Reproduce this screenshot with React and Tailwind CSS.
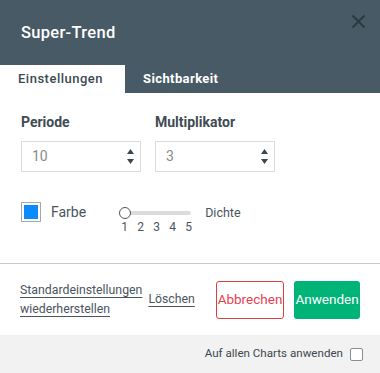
const font = { fontFamily: 'Roboto, "Liberation Sans", sans-serif' };

const NumberInput = ({ value }) => (
  <div className="w-[120px] h-[31px] border border-[#dcdcdc] flex items-center justify-between pl-[10px] pr-[6px]">
    <span className="text-[14px] text-[#8a8a8a]">{value}</span>
    <div className="flex flex-col items-center gap-[5px]">
      <svg width="7" height="5" viewBox="0 0 7 5"><path d="M3.5 0L7 5H0z" fill="#3c4850" /></svg>
      <svg width="7" height="5" viewBox="0 0 7 5"><path d="M0 0h7L3.5 5z" fill="#3c4850" /></svg>
    </div>
  </div>
);

export default function App() {
  return (
    <div className="w-[380px] h-[373px] bg-white flex flex-col overflow-hidden" style={font}>
      {/* Header */}
      <div className="bg-[#485a66] relative">
        <div className="h-[65px] flex items-center pl-[21px] pt-[1px]">
          <h1 className="text-[16.5px] font-medium text-white tracking-[0.3px]">Super-Trend</h1>
        </div>
        <svg className="absolute left-[351px] top-[14px]" width="15" height="15" viewBox="0 0 15 15">
          <path d="M1.5 1.5l12 12M13.5 1.5l-12 12" stroke="#2c3940" strokeWidth="2" />
        </svg>
        <div className="flex h-[28px]">
          <div className="w-[125px] bg-white flex items-center pl-[18px] text-[13px] font-medium text-[#3d4a52] tracking-[0.5px]">Einstellungen</div>
          <div className="flex items-center pl-[18px] text-[13px] font-bold text-white tracking-[0.4px]">Sichtbarkeit</div>
        </div>
      </div>

      {/* Body */}
      <div className="h-[170px] pl-[21px] pt-[20px]">
        <div className="flex gap-[14px]">
          <div>
            <div className="text-[14px] font-bold text-[#404b53] leading-[18px] mb-[10px]">Periode</div>
            <NumberInput value="10" />
          </div>
          <div>
            <div className="text-[14px] font-bold text-[#404b53] leading-[18px] mb-[10px]">Multiplikator</div>
            <NumberInput value="3" />
          </div>
        </div>
        <div className="flex items-start mt-[30px]">
          <div className="w-[20px] h-[20px] border border-[#a8a8a8] p-[2px]">
            <div className="w-full h-full bg-[#0a8cff]" />
          </div>
          <span className="ml-[10px] text-[14px] text-[#4a5560] leading-[20px]">Farbe</span>
          <div className="ml-[33px] w-[80px] flex flex-col">
            <div className="relative h-[20px]">
              <div className="absolute left-[6px] top-[9px] w-[66px] h-[4px] bg-[#dcdcdc] rounded" />
              <div className="absolute left-0 top-[5px] w-[12px] h-[12px] rounded-full border border-[#555] bg-white" />
            </div>
            <div className="flex text-[12px] text-[#4a5560] leading-[12px] -mt-[1px]">
              <span className="w-[16.5px] pl-[2px]">1</span>
              <span className="w-[16.5px] pl-[2px]">2</span>
              <span className="w-[16.5px] pl-[2px]">3</span>
              <span className="w-[16.5px] pl-[2px]">4</span>
              <span className="w-[16.5px] pl-[2px]">5</span>
            </div>
          </div>
          <span className="ml-[6px] text-[12.5px] text-[#4a5560] leading-[22px]">Dichte</span>
        </div>
      </div>

      <div className="h-px bg-[#c8c8c8]" />

      {/* Footer */}
      <div className="h-[71px] flex items-center pl-[20px] pr-[20px]">
        <div className="flex flex-col text-[12.3px] text-[#4a5560] leading-[19px] underline underline-offset-[3px] mt-[1px]">
          <span>Standardeinstellungen</span>
          <span>wiederherstellen</span>
        </div>
        <span className="ml-[6px] text-[12.3px] text-[#4a5560] underline underline-offset-[3px]">Löschen</span>
        <button className="ml-auto w-[68px] h-[38px] border border-[#e23d3d] rounded-[3px] text-[13.5px] text-[#e8404f] bg-white">Abbrechen</button>
        <button className="ml-[10px] w-[66px] h-[38px] rounded-[3px] text-[13.5px] text-white bg-[#00b377]">Anwenden</button>
      </div>

      <div className="flex-1 bg-[#f2f2f2] flex items-center justify-end pr-[17px]">
        <span className="text-[11.6px] text-[#3c4850] mr-[7px]">Auf allen Charts anwenden</span>
        <div className="w-[13px] h-[13px] border border-[#8c8c8c] rounded-[2px] bg-white" />
      </div>
    </div>
  );
}
